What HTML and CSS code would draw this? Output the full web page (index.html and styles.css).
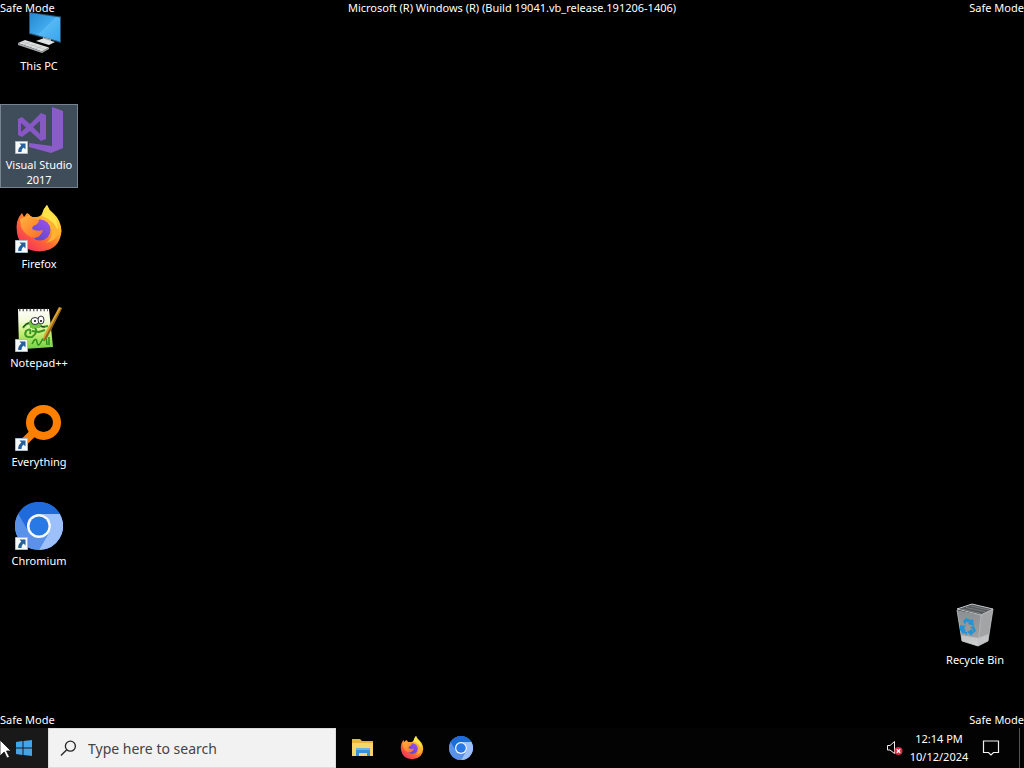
FILE: index.html
```html
<!DOCTYPE html>
<html lang="en">
<head>
<meta charset="utf-8">
<meta name="viewport" content="width=device-width, initial-scale=1">
<title>Desktop</title>
<link rel="stylesheet" href="styles.css">
</head>
<body>
<svg class="defs" aria-hidden="true">
  <defs>
    <linearGradient id="screen" x1="0" y1="0" x2="1" y2="1"><stop offset="0" stop-color="#2488d0"/><stop offset=".5" stop-color="#42a9ec"/><stop offset=".52" stop-color="#55b8f4"/><stop offset="1" stop-color="#3aa5ea"/></linearGradient>
    <linearGradient id="fox" x1=".85" y1=".1" x2=".2" y2=".95"><stop offset="0" stop-color="#fff04a"/><stop offset=".3" stop-color="#ffb52c"/><stop offset=".6" stop-color="#ff6b32"/><stop offset="1" stop-color="#f5315c"/></linearGradient>
    <linearGradient id="foxhead" x1="0" y1="0" x2="1" y2="1"><stop offset="0" stop-color="#ffb43a"/><stop offset="1" stop-color="#ff6a2c"/></linearGradient>
    <linearGradient id="globe" x1=".8" y1="0" x2=".2" y2="1"><stop offset="0" stop-color="#9a50e8"/><stop offset="1" stop-color="#5a48c8"/></linearGradient>
    <linearGradient id="page" x1="0" y1="0" x2="0" y2="1"><stop offset="0" stop-color="#fdfdfd"/><stop offset=".3" stop-color="#f4fbd8"/><stop offset=".6" stop-color="#c6ee74"/><stop offset="1" stop-color="#74cf45"/></linearGradient>
    <linearGradient id="bin" x1="0" y1="0" x2="0" y2="1"><stop offset="0" stop-color="#8d9092"/><stop offset=".7" stop-color="#9b9d9f"/><stop offset="1" stop-color="#c4c5c6"/></linearGradient>
    <symbol id="link" viewBox="0 0 13 13">
      <path fill="#f7f9fb" stroke="#aebbc6" d="M.5.5h12v12H.5z"/>
      <path fill="#255f9c" d="M4.500 2.500H10.500V8.500L8.600 6.600Q6.500 8 6.400 11H3.200Q2.800 7.200 6.400 4.400z"/>
    </symbol>
    <symbol id="firefox" viewBox="0 0 48 48">
      <path fill="url(#fox)" d="M27 9Q28 4 32 0Q34 5 38 8Q46 15 46.500 26Q45 45 25 46.500Q5 46 2 28Q0 15 7 8L9 12L12 8Q15 9 16 12L22 12Q25 12 27 9z"/>
      <circle cx="25" cy="25" r="10.500" fill="url(#globe)"/>
      <path fill="url(#foxhead)" d="M5 14L12 11Q17 10 19 14L24 15Q24 19 18 21L17 24Q22 27 28 25Q26 32 19 33Q10 31 6 22z"/>
      <path fill="#ffb133" d="M27 12Q35 15 37 24Q38 33 31 38Q42 36 44 25Q43 15 37 10Q33 7 32 1Q28 6 27 12z"/>
      <path fill="#ffe34a" d="M32 0Q34 6 38 10Q43 15 43 25Q38 15 27 11Q28 4 32 0z"/>
    </symbol>
    <symbol id="chromium" viewBox="0 0 48 48">
      <circle cx="24" cy="24" r="24" fill="#4587e8"/>
      <path fill="#1f6bdc" d="M3.200 12A24 24 0 0 1 44.800 12H24A12 12 0 0 0 13.600 30z"/>
      <path fill="#9dc0fa" d="M44.800 12A24 24 0 0 1 24 48L34.400 30A12 12 0 0 0 24 12z"/>
      <path fill="#5a92ea" d="M3.200 12A24 24 0 0 0 24 48L34.400 30A12 12 0 0 1 13.600 30z"/>
      <circle cx="24" cy="24" r="12" fill="#f4f8ff"/>
      <circle cx="24" cy="24" r="9.500" fill="#2878e6"/>
    </symbol>
  </defs>
</svg>

<main class="desktop">
  <div class="icons">
    <button class="shortcut" type="button">
      <svg class="art" viewBox="0 0 48 48" aria-hidden="true">
        <path fill="#27516f" d="M14 5L46 9.500V36L14 27z"/>
        <path fill="url(#screen)" d="M15 6L45 10.500V34.500L15 26z"/>
        <path fill="#9ca3a8" d="M28 30L36 32V36H28z"/>
        <path fill="#dfe2e4" d="M21 34L28 31.500L40 35L34 38z"/>
        <path fill="#dcdddd" d="M3 36L10 33L34 40.500L27 44.500z"/>
        <path fill="#a6a9ab" d="M3 36L27 44.500L34 40.500V42L27 46L3 38z"/>
        <path stroke="#b5b8ba" stroke-width=".6" d="M7 35L30 42.500M8 38L15 35M14 40L21 37M20 42L27 39"/>
      </svg>
      <span>This PC</span>
    </button>
    <button class="shortcut selected" type="button">
      <span class="picture">
        <svg class="art" viewBox="0 0 48 48" aria-hidden="true">
          <path fill="#8a5cc9" d="M37 1L48 5V42L36 47L14 41V37L37 40z"/>
          <path fill="#8658c4" fill-rule="evenodd" d="M3 13L7 11L15 18L26 7L31 9V33L26 35L15 25L7 31L3 29zM6 17V26L11 21.500zM25 15L18 21L25 28z"/>
        </svg>
        <svg class="link" aria-hidden="true"><use href="#link"/></svg>
      </span>
      <span>Visual Studio 2017</span>
    </button>
    <button class="shortcut" type="button">
      <span class="picture">
        <svg class="art" aria-hidden="true"><use href="#firefox"/></svg>
        <svg class="link" aria-hidden="true"><use href="#link"/></svg>
      </span>
      <span>Firefox</span>
    </button>
    <button class="shortcut" type="button">
      <span class="picture">
        <svg class="art" viewBox="0 0 48 48" aria-hidden="true">
          <path fill="url(#page)" d="M3 5H34L38 43L9 45H4z"/>
          <path fill="none" stroke="#666" stroke-width="2.500" stroke-dasharray="1.500 2" d="M4 6H33"/>
          <path fill="none" stroke="#399523" stroke-width="2" d="M8 24Q13 16 18 22Q25 27 17 33Q8 34 11 27Q17 23 15 30M17 24Q23 20 28 23L33 22M17 27L24 28L30 26"/>
          <path fill="none" stroke="#263b20" d="M8 23Q15 15 20 21L30 23"/>
          <path fill="#73c544" d="M14 17Q20 12 27 18L25 24L15 24z"/>
          <ellipse cx="20" cy="17" rx="4" ry="3.500" fill="#fff" stroke="#334"/>
          <ellipse cx="26" cy="16" rx="3" ry="4" fill="#fff" stroke="#334"/>
          <circle cx="20" cy="17" r="1"/><circle cx="26" cy="17" r="1"/>
          <path fill="none" stroke="#2d8e1b" stroke-width="1.500" d="M17 40Q21 32 22 38T26 38T29 37L31 31L32 41M34 33V41"/>
          <path fill="#dba22d" d="M44 3L47 4L32 34L28 37L29 31z"/>
          <path fill="#8a6228" d="M46 4L47 4L32 34L28 37z"/>
        </svg>
        <svg class="link" aria-hidden="true"><use href="#link"/></svg>
      </span>
      <span>Notepad++</span>
    </button>
    <button class="shortcut" type="button">
      <span class="picture">
        <svg class="art" viewBox="0 0 48 48" aria-hidden="true">
          <circle cx="28.500" cy="19.500" r="13.500" fill="none" stroke="#ff8000" stroke-width="8"/>
          <path stroke="#ff8000" stroke-width="8" d="M20 28L8 40"/>
        </svg>
        <svg class="link" aria-hidden="true"><use href="#link"/></svg>
      </span>
      <span>Everything</span>
    </button>
    <button class="shortcut" type="button">
      <span class="picture">
        <svg class="art" aria-hidden="true"><use href="#chromium"/></svg>
        <svg class="link" aria-hidden="true"><use href="#link"/></svg>
      </span>
      <span>Chromium</span>
    </button>
  </div>
  <div class="icons">
    <button class="shortcut" type="button">
      <svg class="art" viewBox="0 0 48 48" aria-hidden="true">
        <path fill="url(#bin)" d="M6 9L30 14L27 45L11 40z"/>
        <path fill="#a2a4a5" d="M30 14L42 8L37 40L27 45z"/>
        <path fill="#d9dadb" opacity=".6" d="M10 34L27 37L38 33L37 40L27 45L11 40z"/>
        <path fill="#55585a" stroke="#c4c7c9" d="M6 8L21 3L42 8L30 14z"/>
        <path fill="none" stroke="#7c7f81" d="M11 8L30 12.500M15 6.500L34 10.500M20 5L38 9"/>
        <path fill="none" stroke="#c4c6c7" stroke-width=".8" d="M6 9L11 40L27 45L37 40L42 8M30 14L27 45"/>
        <path fill="#2394d6" d="M12 20L15 17L20 19L22 18L23 25L17 23L18 21L15 21L14 24zM9 24L15 25L13 27L15 30L12 33L9 29zM19 26L23 25L25 30L21 33V35L16 31L21 28V31L22 29zM12 31L16 31V34z"/>
      </svg>
      <span>Recycle Bin</span>
    </button>
  </div>
  <div class="watermark top">
    <span>Safe Mode</span>
    <span>Microsoft (R) Windows (R) (Build 19041.vb_release.191206-1406)</span>
    <span>Safe Mode</span>
  </div>
  <div class="watermark bottom">
    <span>Safe Mode</span>
    <span>Safe Mode</span>
  </div>
</main>

<footer class="taskbar">
  <button class="start" type="button" aria-label="Start">
    <svg class="logo" viewBox="0 0 16 16" aria-hidden="true"><path fill="#45a4e8" d="M0 2L6.500 1V7.500H0zM7.500 1L16 0V7.500H7.500zM0 8.500H6.500V15L0 14zM7.500 8.500H16V16L7.500 15z"/></svg>
  </button>
  <label class="search">
    <svg class="glass" viewBox="0 0 18 18" aria-hidden="true"><g fill="none" stroke="#262626" stroke-width="1.400"><circle cx="11" cy="6.500" r="5.300"/><path d="M7.200 10.300L1 16.500"/></g></svg>
    <input class="query" type="text" placeholder="Type here to search" aria-label="Search">
  </label>
  <nav class="apps">
    <button class="app" type="button" aria-label="File Explorer">
      <svg class="small" viewBox="0 0 24 24" aria-hidden="true">
        <path fill="#e9b63c" d="M1 3H9L11 5H22V20H1z"/>
        <path fill="#f8d568" d="M1 7H22V20H1z"/>
        <path fill="#3c8fdb" d="M5 12H19V20H16V17H8V20H5z"/>
        <path fill="#6cb0ea" d="M5 12H19V14H5z"/>
      </svg>
    </button>
    <button class="app" type="button" aria-label="Firefox"><svg class="small" aria-hidden="true"><use href="#firefox"/></svg></button>
    <button class="app" type="button" aria-label="Chromium"><svg class="small" aria-hidden="true"><use href="#chromium"/></svg></button>
  </nav>
  <div class="tray">
    <button class="volume" type="button" aria-label="Volume">
      <svg class="speaker" viewBox="0 0 18 16" aria-hidden="true">
        <path fill="none" stroke="#eee" d="M1.500 5.500H4L8.500 1.500V13.500L4 10H1.500z"/>
        <circle cx="12.500" cy="11" r="4" fill="#d92c43"/>
        <path stroke="#fff" stroke-width="1.300" d="M10.800 9.300L14.200 12.700M14.200 9.300L10.800 12.700"/>
      </svg>
    </button>
    <button class="clock" type="button"><span>12:14 PM</span><span>10/12/2024</span></button>
    <button class="notes" type="button" aria-label="Notifications">
      <svg class="bubble" viewBox="0 0 18 18" aria-hidden="true"><path fill="none" stroke="#f2f2f2" stroke-width="1.200" d="M1.500 2H16.500V13.500H11.500L9 16L6.500 13.500H1.500z"/></svg>
    </button>
    <button class="peek" type="button" aria-label="Show desktop"></button>
  </div>
  <svg class="cursor" viewBox="0 0 12 19" aria-hidden="true"><path fill="#fff" stroke="#111" stroke-width=".8" d="M0 0L11 11H6.500L9.500 17L7 18L4.200 12L0 16z"/></svg>
</footer>
</body>
</html>
```
FILE: styles.css
```css
* {
  box-sizing: border-box;
}

body {
  margin: 0;
  min-height: 100vh;
  display: flex;
  flex-direction: column;
  background: #000;
  color: #fff;
  font: 12px/15px "Noto Sans", "Open Sans", sans-serif;
}

button {
  margin: 0;
  padding: 0;
  border: 0;
  background: none;
  color: inherit;
  font: inherit;
}

svg {
  display: block;
}

.defs {
  position: absolute;
  width: 0;
  height: 0;
}

.desktop {
  position: relative;
  flex: 1;
  display: flex;
  justify-content: space-between;
  padding: 5px 10px 30px 0;
}

.icons {
  display: grid;
  grid-auto-rows: 99px;
  align-items: start;
}

.icons:nth-child(2) {
  align-self: flex-end;
}

.shortcut {
  width: 78px;
  display: flex;
  flex-direction: column;
  align-items: center;
  gap: 3px;
  padding: 2px 1px 1px;
  font-size: 11px;
  text-align: center;
}

.selected {
  background: #3f4d5b;
  outline: 1px solid #77848f;
  outline-offset: -1px;
}

.picture {
  position: relative;
}

.art {
  width: 48px;
  height: 48px;
}

.link {
  position: absolute;
  left: 0;
  bottom: 0;
  width: 13px;
  height: 13px;
}

.watermark {
  position: absolute;
  left: 0;
  right: 0;
  display: flex;
  justify-content: space-between;
  font-size: 11px;
  pointer-events: none;
}

.top {
  top: 0;
}

.bottom {
  bottom: 1px;
}

.taskbar {
  position: relative;
  height: 40px;
  display: flex;
  background: #030303;
}

.start {
  width: 48px;
  display: grid;
  place-items: center;
  background: #191919;
}

.logo {
  width: 16px;
  height: 16px;
}

.search {
  width: 288px;
  display: flex;
  align-items: center;
  gap: 11px;
  padding: 0 11px;
  background: #f2f2f2;
  border: 1px solid #dcdcdc;
}

.glass {
  width: 17px;
  height: 17px;
  flex: none;
}

.query {
  flex: 1;
  min-width: 0;
  padding: 2px 0 0;
  border: 0;
  outline: 0;
  background: none;
  color: #333;
  font: 14px/20px "Noto Sans", "Open Sans", sans-serif;
}

.query::placeholder {
  color: #444;
  opacity: 1;
}

.apps {
  display: flex;
  gap: 1px;
  padding-left: 3px;
}

.app {
  width: 48px;
  display: grid;
  place-items: center;
}

.small {
  width: 24px;
  height: 24px;
}

.tray {
  margin-left: auto;
  display: flex;
}

.volume,
.notes {
  display: grid;
  place-items: center;
}

.volume {
  width: 24px;
}

.speaker {
  width: 18px;
  height: 16px;
}

.clock {
  width: 64px;
  display: flex;
  flex-direction: column;
  justify-content: center;
  align-items: center;
  font-size: 11px;
  line-height: 18px;
}

.notes {
  width: 40px;
}

.bubble {
  width: 18px;
  height: 18px;
}

.peek {
  width: 5px;
  margin-left: 8px;
  border-left: 1px solid #555;
}

.cursor {
  position: absolute;
  left: 0;
  top: 12px;
  width: 12px;
  height: 19px;
}
```
